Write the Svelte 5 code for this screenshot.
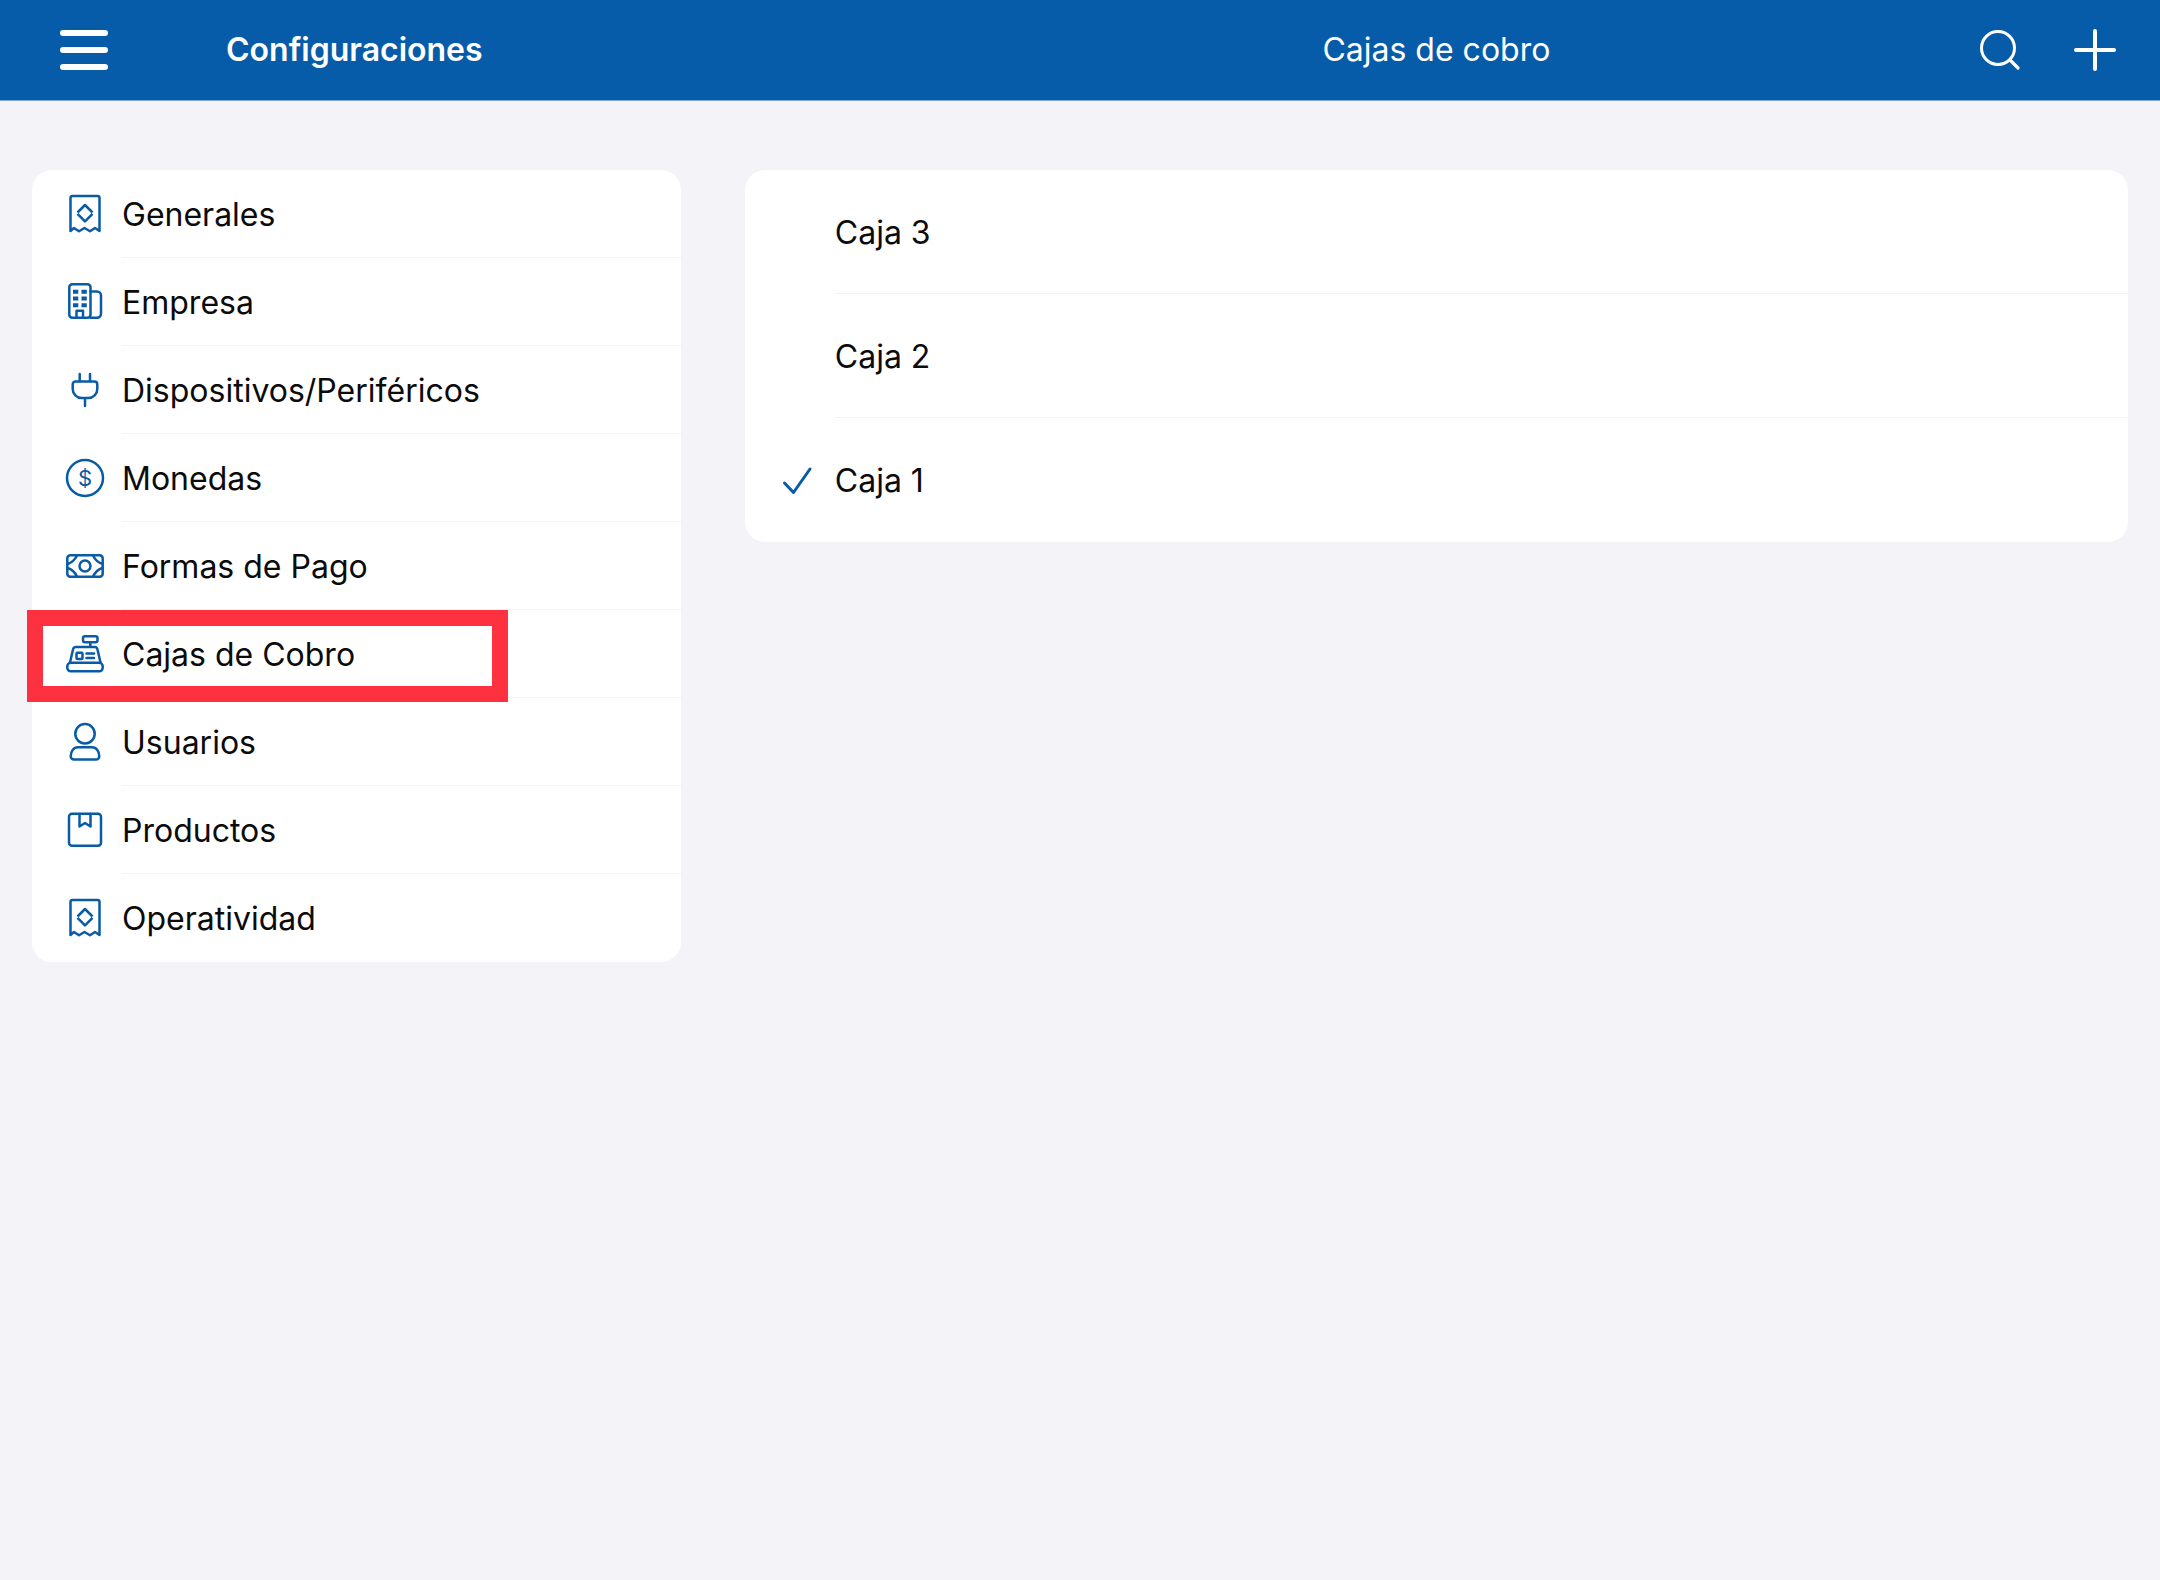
<script>
  const sections = [
    { label: "Generales", icon: "receipt" },
    { label: "Empresa", icon: "building" },
    { label: "Dispositivos/Periféricos", icon: "plug" },
    { label: "Monedas", icon: "coin" },
    { label: "Formas de Pago", icon: "banknote" },
    { label: "Cajas de Cobro", icon: "register" },
    { label: "Usuarios", icon: "user" },
    { label: "Productos", icon: "box" },
    { label: "Operatividad", icon: "receipt" },
  ];
  const registers = ["Caja 3", "Caja 2", "Caja 1"];

  let current = "Cajas de Cobro";
  let selected = "Caja 1";
</script>

<header>
  <div class="side bar">
    <button class="menu" aria-label="Menú">
      <svg width="48" height="40" viewBox="0 0 48 40">
        <path d="M3 3h42M3 20h42M3 37h42" stroke-width="6" />
      </svg>
    </button>
    <h1>Configuraciones</h1>
  </div>
  <div class="main bar">
    <h2>Cajas de cobro</h2>
    <div class="actions">
      <button aria-label="Buscar">
        <svg width="44" height="44" viewBox="0 0 44 44">
          <circle cx="20" cy="20" r="16.5" stroke-width="3" />
          <path d="M32 32l8 8" stroke-width="3.2" />
        </svg>
      </button>
      <button aria-label="Agregar">
        <svg width="44" height="44" viewBox="0 0 44 44">
          <path d="M22 3v38M3 22h38" stroke-width="4" />
        </svg>
      </button>
    </div>
  </div>
</header>

<main>
  <nav class="side">
    <ul class="card">
      {#each sections as { label, icon }}
        <li>
          <a href="#{icon}" on:click|preventDefault={() => (current = label)}>
            <svg class="icon" width="40" height="40" viewBox="0 0 40 40">
              {#if icon === "receipt"}
                <path d="M5.5 37V4a2 2 0 0 1 2-2h25a2 2 0 0 1 2 2v33l-4.5-3-5 3.3-5.500-3.300-5.500 3.300-5-3.300z" />
                <path d="M12.5 18.5L20 11l7.5 7.500M12.500 19.800L20 27.300l7.500-7.500" stroke-linecap="butt" />
              {:else if icon === "building"}
                <rect x="4.3" y="2.3" width="21.2" height="33.5" rx="3" />
                <path d="M25.5 9.5H32a4 4 0 0 1 4 4v18.3a4 4 0 0 1-4 4h-6.5M11.5 35.8v-7H18v7" />
                <g class="windows">
                  <path d="M8 9.7h5.3M16.5 9.700h5.300M8 16.500h5.300M16.500 16.500h5.300M8 23.300h5.300M16.500 23.300h5.300" />
                </g>
              {:else if icon === "plug"}
                <path d="M14.7 4v7M25 4v7M20 29v7" />
                <path d="M10.5 11.5h19a2.8 2.8 0 0 1 2.8 2.8V19a9 9 0 0 1-9 9h-6.6a9 9 0 0 1-9-9v-4.700a2.800 2.800 0 0 1 2.800-2.800z" />
              {:else if icon === "coin"}
                <circle cx="20" cy="20" r="18" />
                <text x="20" y="28" text-anchor="middle">$</text>
              {:else if icon === "banknote"}
                <rect x="2.3" y="9.3" width="35.4" height="21.4" rx="3" />
                <circle cx="20" cy="20" r="5.5" />
                <path d="M12 9.5C10 13.5 6 17 2.500 18M12 30.500C10 26.500 6 23 2.500 22M28 9.500c2 4 6 7.500 9.500 8.500M28 30.500c2-4 6-7.500 9.500-8.500" />
              {:else if icon === "register"}
                <rect x="18" y="2.3" width="14.5" height="6" rx="2" />
                <path d="M25.3 9v4M5 28.5l3-13a3 3 0 0 1 3-2.5h18.5a3 3 0 0 1 3 2.5l3 13" />
                <rect x="2.3" y="28.8" width="35.4" height="8.5" rx="3.5" />
                <rect x="11.5" y="18.7" width="6" height="6.3" rx="1" />
                <path d="M21.5 19.500H29M21.500 24H29" />
              {:else if icon === "user"}
                <circle cx="20" cy="11.7" r="9.7" />
                <path d="M13 25.3h14c4.5 0 7.3 4 7.3 9a3.3 3.3 0 0 1-3.3 3.300H9a3.300 3.300 0 0 1-3.300-3.300c0-5 2.800-9 7.300-9z" />
              {:else}
                <rect x="4" y="3.7" width="32" height="32" rx="3" />
                <path d="M14.5 4v12.5L20 13l5.5 3.500V4" />
              {/if}
            </svg>
            <span class="label">{label}</span>
          </a>
          {#if label === current}
            <div class="highlight"></div>
          {/if}
        </li>
      {/each}
    </ul>
  </nav>

  <section class="main">
    <ul class="card tall">
      {#each registers as name}
        <li>
          <button on:click={() => (selected = name)}>
            <svg class="icon" width="40" height="40" viewBox="0 0 40 40">
              {#if name === selected}
                <path d="M6.5 23l9 9.5L32 9" stroke-width="3" />
              {/if}
            </svg>
            <span class="label">{name}</span>
          </button>
        </li>
      {/each}
    </ul>
  </section>
</main>

<style>
  :global(body) {
    margin: 0;
    background: #f3f3f8;
    font-family: Inter, "Liberation Sans", sans-serif;
    font-size: 32px;
    line-height: 44px;
    color: #0b0b0b;
  }
  header,
  main {
    display: flex;
  }
  header {
    height: 100px;
    background: #065ca8;
    border-bottom: 1px solid #7fa9d0;
    color: #fff;
  }
  .side,
  .main {
    box-sizing: border-box;
    padding: 0 32px;
  }
  .side {
    width: 33%;
  }
  .main {
    width: 67%;
  }
  .bar {
    display: flex;
    align-items: center;
  }
  .main.bar {
    display: grid;
    grid-template-columns: 1fr auto 1fr;
  }
  h1,
  h2 {
    margin: 0;
    font-size: 32px;
    font-weight: 600;
  }
  h2 {
    grid-column: 2;
    font-weight: 400;
  }
  button {
    display: flex;
    padding: 0;
    border: 0;
    background: none;
    color: inherit;
    font: inherit;
    cursor: pointer;
  }
  .menu {
    margin: 0 118px 0 28px;
  }
  .actions {
    display: flex;
    justify-content: flex-end;
    gap: 51px;
    padding-right: 11px;
  }
  svg {
    flex: none;
    fill: none;
    stroke: #fff;
    stroke-linecap: round;
    stroke-linejoin: round;
  }
  main {
    padding-top: 69px;
    align-items: flex-start;
  }
  .card {
    margin: 0;
    padding: 0;
    list-style: none;
    background: #fff;
    border-radius: 20px;
  }
  li {
    position: relative;
  }
  li a,
  li button {
    display: flex;
    align-items: center;
    width: 100%;
    box-sizing: border-box;
    height: 88px;
    padding-left: 33px;
    color: inherit;
    text-align: left;
    text-decoration: none;
  }
  .tall button {
    height: 124px;
  }
  .icon {
    margin-right: 17px;
    stroke: #0a5ba6;
    stroke-width: 2.5;
  }
  .windows {
    stroke-width: 4;
    stroke-linecap: butt;
  }
  .icon text {
    fill: #0a5ba6;
    stroke: none;
    font-size: 22px;
  }
  .label {
    display: flex;
    flex: 1;
    align-items: center;
    align-self: stretch;
    padding-top: 2px;
    border-bottom: 1px solid #f3f3f5;
  }
  li:last-child .label {
    border-bottom-color: transparent;
  }
  .highlight {
    position: absolute;
    top: 0;
    left: -5px;
    z-index: 1;
    box-sizing: border-box;
    width: 481px;
    height: 92px;
    border: 16px solid #fe3140;
    pointer-events: none;
  }
</style>
